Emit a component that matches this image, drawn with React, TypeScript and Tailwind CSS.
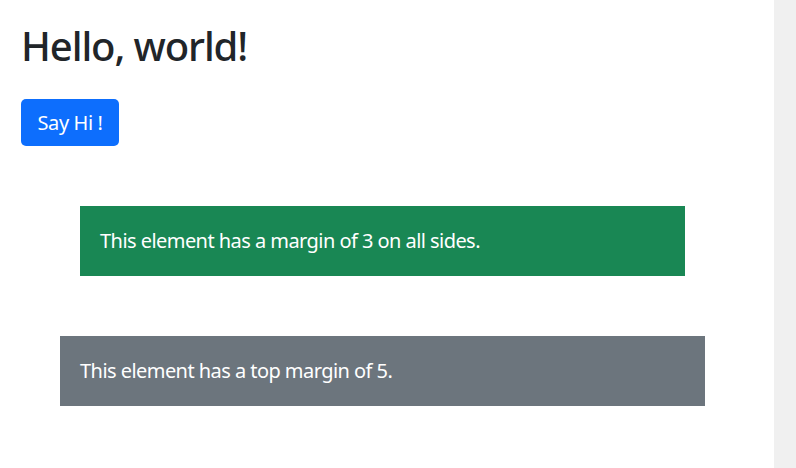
export default function App() {
  return (
    <div className="flex h-screen w-full bg-white font-['Noto_Sans',sans-serif]">
      <main className="flex-1 pt-[22px]">
        <h1 className="ml-[21px] text-[40px] leading-[48px] font-medium tracking-[-1.1px] text-[#212529]">
          Hello, world!
        </h1>
        <button className="ml-[21px] mt-[29px] h-[47px] w-[98px] rounded-[5px] bg-[#0d6efd] text-[20px] leading-[30px] tracking-[-0.4px] text-white">
          Say Hi !
        </button>
        <section className="ml-[60px] mt-[60px] w-[645px] text-[20px] leading-[30px] tracking-[-0.55px] text-white">
          <div className="mx-[20px] bg-[#198754] p-[20px]">
            This element has a margin of 3 on all sides.
          </div>
          <div className="mt-[60px] bg-[#6c757d] p-[20px]">
            This element has a top margin of 5.
          </div>
        </section>
      </main>
      <div className="h-full w-[22px] bg-[#f0f0f0]" />
    </div>
  );
}
